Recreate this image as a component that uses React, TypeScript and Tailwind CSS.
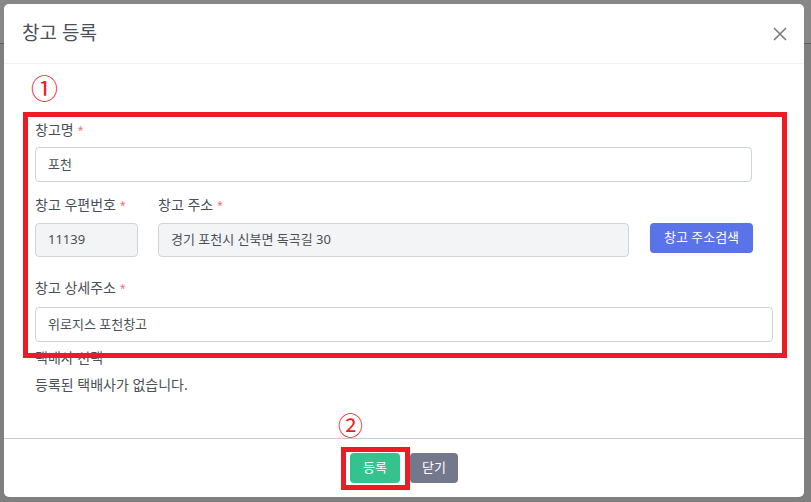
import React from "react";

const font = { fontFamily: '"Noto Sans", "Noto Sans CJK KR", sans-serif' };

function Label({ text }: { text: string }) {
  return (
    <div className="h-[20px] text-[14px] leading-[20px] text-[#495057]">
      {text}
      <span className="ml-[4px] text-[10px] text-[#f46a6a] align-top">*</span>
    </div>
  );
}

export default function App() {
  return (
    <div
      className="relative w-[811px] h-[502px] overflow-hidden bg-[#7f7f7f]"
      style={font}
    >
      {/* page behind the backdrop */}
      <div className="h-[44px] bg-[#878787] border-b border-[#5e5e5e]" />

      {/* modal */}
      <div className="absolute left-[4px] top-[4px] w-[800px] h-[493px] bg-white rounded-[5px] flex flex-col">
        <div className="h-[60px] shrink-0 flex items-center justify-between pl-[18px] pr-[16px] border-b border-[#eff2f7]">
          <div className="text-[19px] text-[#495057]">창고 등록</div>
          <svg width="16" height="16" viewBox="0 0 16 16" className="mt-[1px]">
            <path d="M2 2 L14 14 M14 2 L2 14" stroke="#7a7a7a" strokeWidth="1.6" />
          </svg>
        </div>

        <div className="h-[374px] shrink-0 pl-[31px] pt-[56px]">
          <Label text="창고명" />
          <div className="mt-[7px] w-[717px] h-[35px] border border-[#ced4da] rounded-[4px] flex items-center px-[12px] text-[13px] text-[#495057]">
            포천
          </div>

          <div className="mt-[13px] flex">
            <div className="w-[103px]">
              <Label text="창고 우편번호" />
              <div className="mt-[8px] h-[34px] border border-[#ced4da] rounded-[4px] bg-[#f3f4f6] flex items-center px-[12px] text-[13px] text-[#495057]">
                11139
              </div>
            </div>
            <div className="ml-[20px] w-[471px]">
              <Label text="창고 주소" />
              <div className="mt-[8px] h-[34px] border border-[#ced4da] rounded-[4px] bg-[#f3f4f6] flex items-center px-[12px] text-[13px] text-[#495057]">
                경기 포천시 신북면 독곡길 30
              </div>
            </div>
            <div className="ml-[21px] w-[103px] pt-[28px]">
              <div className="h-[30px] rounded-[4px] bg-[#5b73e8] text-white text-[13px] flex items-center justify-center">
                창고 주소검색
              </div>
            </div>
          </div>

          <div className="mt-[21px]">
            <Label text="창고 상세주소" />
          </div>
          <div className="mt-[9px] w-[738px] h-[35px] border border-[#ced4da] rounded-[4px] flex items-center px-[12px] text-[13px] text-[#495057]">
            위로지스 포천창고
          </div>

          <div className="mt-[6px] h-[20px] text-[14px] leading-[20px] text-[#495057]">택배사 선택</div>
          <div className="mt-[7px] h-[20px] text-[14px] leading-[20px] text-[#495057]">등록된 택배사가 없습니다.</div>
        </div>

        <div className="h-[59px] shrink-0 border-t border-[#c9c9c9] flex items-center justify-center gap-[10px]">
          <div className="w-[50px] h-[30px] rounded-[4px] bg-[#34c38f] text-white text-[13px] flex items-center justify-center">
            등록
          </div>
          <div className="w-[48px] h-[30px] rounded-[4px] bg-[#74788d] text-white text-[13px] flex items-center justify-center">
            닫기
          </div>
        </div>

        {/* annotations */}
        <div
          className="absolute left-[27px] top-[69px] text-[27px] leading-[30px] text-[#ed1c24]"
          style={{ fontFamily: '"Noto Sans CJK KR", sans-serif' }}
        >
          ①
        </div>
        <div className="absolute left-[19px] top-[108px] w-[764px] h-[246px] border-[5px] border-[#ed1c24]" />
        <div
          className="absolute left-[334px] top-[406px] text-[25px] leading-[28px] text-[#ed1c24]"
          style={{ fontFamily: '"Noto Sans CJK KR", sans-serif' }}
        >
          ②
        </div>
        <div className="absolute left-[337px] top-[443px] w-[69px] h-[43px] border-[5px] border-[#ed1c24]" />
      </div>
    </div>
  );
}
